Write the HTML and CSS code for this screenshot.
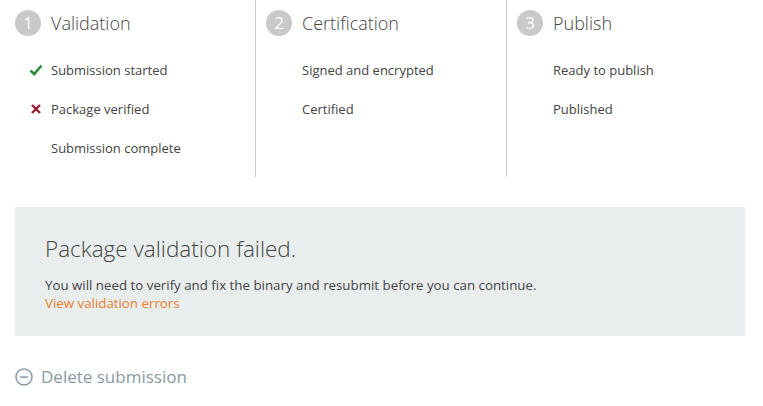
FILE: index.html
```html
<!DOCTYPE html>
<html lang="en">
<head>
    <meta charset="UTF-8">
    <title>Submission status</title>
    <link rel="stylesheet" href="styles.css">
</head>
<body>
    <div class="steps">
        <div class="step">
            <div class="step-head">
                <span class="step-num">1</span>
                <span class="step-title">Validation</span>
            </div>
            <ul class="step-items">
                <li>
                    <svg class="mark" width="14" height="14" viewBox="0 0 14 14"><path d="M1.5 7.5 L5.2 11 L12.5 2.5" fill="none" stroke="#2d8a3e" stroke-width="2.6"/></svg>
                    Submission started
                </li>
                <li>
                    <svg class="mark" width="14" height="14" viewBox="0 0 14 14"><path d="M3 3 L11 11 M11 3 L3 11" fill="none" stroke="#9e1b32" stroke-width="2.4"/></svg>
                    Package verified
                </li>
                <li>Submission complete</li>
            </ul>
        </div>
        <div class="step">
            <div class="step-head">
                <span class="step-num">2</span>
                <span class="step-title">Certification</span>
            </div>
            <ul class="step-items">
                <li>Signed and encrypted</li>
                <li>Certified</li>
            </ul>
        </div>
        <div class="step">
            <div class="step-head">
                <span class="step-num">3</span>
                <span class="step-title">Publish</span>
            </div>
            <ul class="step-items">
                <li>Ready to publish</li>
                <li>Published</li>
            </ul>
        </div>
    </div>

    <div class="notice">
        <h2>Package validation failed.</h2>
        <p>You will need to verify and fix the binary and resubmit before you can continue.</p>
        <a href="#">View validation errors</a>
    </div>

    <a class="delete" href="#">
        <svg width="18" height="18" viewBox="0 0 18 18"><circle cx="9" cy="9" r="8" fill="none" stroke="#8a9ba6" stroke-width="1.5"/><path d="M5 9 H13" stroke="#8a9ba6" stroke-width="1.5"/></svg>
        Delete submission
    </a>
</body>
</html>
```
FILE: styles.css
```css
body {
    margin: 0;
    font-family: "Open Sans", "Noto Sans", sans-serif;
    color: #444;
    background-color: #fff;
}

.steps {
    display: flex;
    padding-left: 15px;
}

.step {
    flex-shrink: 0;
    width: 240px;
    height: 177px;
    padding-left: 10px;
    border-right: 1px solid #ccc;
}

.step:first-child {
    padding-left: 0;
}

.step:last-child {
    border-right: none;
}

.step-head {
    display: flex;
    align-items: center;
    gap: 10px;
    padding-top: 10px;
}

.step-num {
    width: 26px;
    height: 26px;
    border-radius: 50%;
    background-color: #c9c9c9;
    color: #fff;
    font-size: 17px;
    line-height: 26px;
    text-align: center;
}

.step-title {
    font-size: 18px;
    font-weight: 300;
    color: #444;
}

.step-items {
    list-style: none;
    margin: 0;
    padding: 24px 0 0 36px;
}

.step-items li {
    position: relative;
    height: 39px;
    font-size: 13px;
    line-height: 20px;
}

.mark {
    position: absolute;
    left: -22px;
    top: 3px;
}

.notice {
    margin: 30px 18px 0 15px;
    padding: 26px 30px 24px;
    background-color: #e9eded;
}

.notice h2 {
    margin: 0 0 12px;
    font-size: 22.5px;
    font-weight: 300;
    color: #444;
}

.notice p {
    margin: 0;
    font-size: 13.3px;
    line-height: 18px;
}

.notice a {
    display: block;
    font-size: 13.3px;
    line-height: 18px;
    color: #e8802e;
    text-decoration: none;
}

.delete {
    display: flex;
    align-items: center;
    gap: 8px;
    margin: 29px 15px 0;
    font-size: 17px;
    color: #8a9ba6;
    text-decoration: none;
}
```
